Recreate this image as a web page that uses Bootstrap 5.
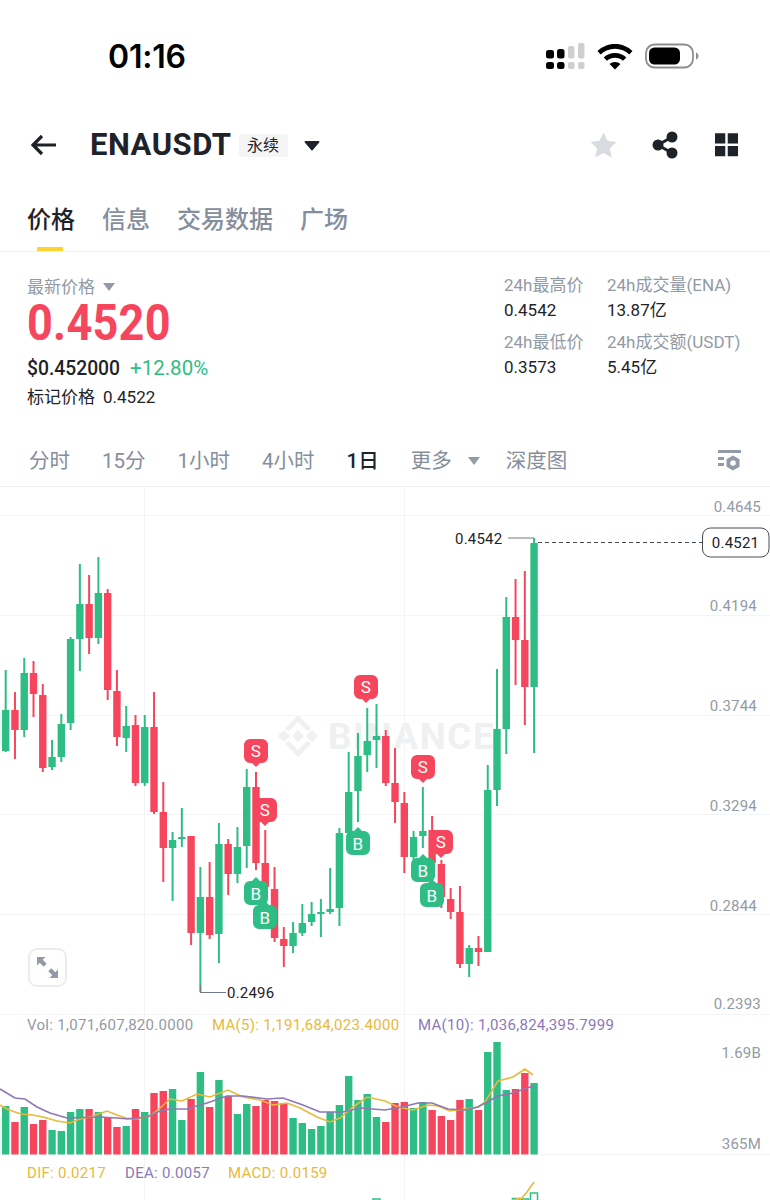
<!DOCTYPE html>
<html lang="zh-CN">
<head>
  <meta charset="UTF-8">
  <title>ENAUSDT</title>
  <link href="https://cdn.jsdelivr.net/npm/bootstrap@5.3.3/dist/css/bootstrap.min.css" rel="stylesheet">
  <style>
    body { width: 770px; height: 1200px; overflow: hidden; background: #fff; color: #1e2329; font-family: Roboto, "Noto Sans CJK SC", sans-serif; }
    .status-bar { height: 114px; padding-left: 108px; }
    .status-time { font: 600 32px/1 Inter, sans-serif; color: #000; width: 436px; letter-spacing: -0.2px; }
    .top-head { height: 62px; padding: 0 32px 0 30px; }
    .pair-name { font-size: 31px; font-weight: 700; margin-left: 33px; letter-spacing: 0.5px; }
    .pair-tag { width: 49px; height: 23px; margin-left: 7px; background: #f5f5f5; border-radius: 3px; font-size: 16px; line-height: 23px; text-align: center; }
    .tabs-row { height: 76px; padding: 29px 0 0 27px; gap: 27px; border-bottom: 1px solid #eef0f2; font-size: 24px; line-height: 30px; color: #848e9c; font-weight: 500; }
    .tab-on { color: #1e2329; position: relative; }
    .tab-on::after { content: ""; position: absolute; left: 10px; bottom: 0; width: 26px; height: 4px; background: #fcd535; }
    .stats-box { height: 184px; padding-left: 27px; }
    .lbl-line { margin-top: 22px; height: 26px; font-size: 17px; line-height: 26px; color: #929aa5; }
    .last-price { height: 46px; font-size: 50px; line-height: 46px; font-weight: 700; color: #f6465d; letter-spacing: 0.3px; transform: scaleX(0.9); transform-origin: left center; }
    .usd-line { margin-top: 10px; height: 24px; font-size: 19.3px; line-height: 24px; font-weight: 500; }
    .up-text { color: #2ebd85; margin-left: 10px; font-size: 20.5px; font-weight: 400; }
    .mark-line { margin-top: 5px; height: 24px; font-size: 17px; line-height: 24px; }
    .mark-line b { font-size: 17px; font-weight: 400; margin-left: 8px; }
    .side-stats { width: 266px; margin-left: auto; padding-top: 21px; display: grid; grid-template-columns: 103px 1fr; row-gap: 8px; align-content: start; font-size: 17px; line-height: 24px; color: #1e2329; }
    .side-stats span { display: block; color: #929aa5; margin-bottom: 1px; white-space: nowrap; }
    .period-row { height: 51px; padding: 0 29px; border-bottom: 1px solid #eef0f2; font-size: 20.5px; color: #848e9c; gap: 32px; }
    .period-on { color: #1e2329; font-weight: 500; }
    .more-box { margin-right: -6px; }
    .tri-gray { width: 0; height: 0; border: 6px solid transparent; border-top: 8px solid #929aa5; border-bottom: 0; }
    .chart-svg { display: block; }
    .chart-svg text { font-family: Roboto, sans-serif; font-size: 15px; letter-spacing: 0.2px; }
    .chart-svg text.legend-txt { letter-spacing: 0.3px; }
  </style>
</head>
<body>

  <!-- status bar -->
  <div class="status-bar d-flex align-items-center">
    <div class="status-time">01:16</div>
    <svg width="155" height="32" viewBox="544 41 155 32">
      <g fill="#000">
        <rect x="546" y="50" width="8" height="8.5" rx="2.5"/><rect x="557" y="49" width="7.5" height="9.5" rx="2.5"/>
        <rect x="546" y="62" width="8" height="7" rx="2.5"/><rect x="557" y="62" width="7.5" height="7" rx="2.5"/>
      </g>
      <g fill="#cfcfcf">
        <rect x="568" y="46" width="6.5" height="12.5" rx="2"/><rect x="578" y="43" width="6.5" height="15.5" rx="2"/>
        <rect x="568" y="62" width="6.5" height="7" rx="2"/><rect x="578" y="62" width="6.5" height="7" rx="2"/>
      </g>
      <path d="M615 44c7 0 13 2.700 17.500 7l-3.200 3.400c-3.700-3.400-8.900-5.600-14.300-5.600s-10.600 2.200-14.300 5.600l-3.200-3.400c4.500-4.300 10.500-7 17.500-7zM615 53c4.500 0 8.300 1.600 11.300 4.400l-3.300 3.400c-2.100-2-4.900-3.100-8-3.100s-5.900 1.100-8 3.100l-3.300-3.400c3-2.800 6.800-4.400 11.300-4.400zM615 62c2.200 0 4 .8 5.400 2l-5.400 5.500-5.400-5.500c1.400-1.200 3.200-2 5.400-2z"/>
      <rect x="646" y="44.500" width="47" height="23" rx="8.500" fill="none" stroke="#8e8e8e" stroke-width="1.800"/>
      <rect x="649" y="47.500" width="31" height="17" rx="5.500"/>
      <path d="M696 52.500c1.500.5 2.500 2 2.500 3.500s-1 3-2.500 3.500z" fill="#8e8e8e"/>
    </svg>
  </div>

  <!-- pair header -->
  <div class="top-head d-flex align-items-center">
    <svg width="27" height="22" viewBox="0 0 27 22"><path d="M26 11H3M12 2l-9 9 9 9" fill="none" stroke="#1e2329" stroke-width="3.200"/></svg>
    <div class="pair-name">ENAUSDT</div>
    <div class="pair-tag">永续</div>
    <svg class="ms-3" width="16" height="11" viewBox="0 0 16 11"><path d="M1.500 1h13c.8 0 1.200.9.700 1.500L8.800 10c-.4.500-1.200.5-1.600 0L.8 2.500C.3 1.900.7 1 1.500 1z" fill="#1e2329"/></svg>
    <svg class="ms-auto" width="27" height="26" viewBox="0 0 27 26"><path d="M13.500 .5l4 8.300 9 1.200-6.500 6.300 1.600 9.100-8.100-4.300-8.100 4.300L7 16.300.5 10l9-1.200z" fill="#d8dce1"/></svg>
    <svg style="margin-left:34.500px" width="26" height="28" viewBox="0 0 26 28">
      <g fill="#1e2329"><circle cx="20" cy="6" r="5.500"/><circle cx="20" cy="22" r="5.500"/><circle cx="6" cy="14" r="5.500"/></g>
      <path d="M20 6L6 14l14 8" fill="none" stroke="#1e2329" stroke-width="3"/>
    </svg>
    <svg style="margin-left:37.500px" width="23" height="24" viewBox="0 0 23.500 24" fill="#1e2329">
      <rect width="10.500" height="10.500"/><rect x="13" width="10.500" height="10.500"/><rect y="13" width="10.500" height="10.500"/><rect x="13" y="13" width="10.500" height="10.500"/>
    </svg>
  </div>

  <!-- tabs -->
  <div class="tabs-row d-flex">
    <div class="tab-on">价格</div>
    <div>信息</div>
    <div>交易数据</div>
    <div>广场</div>
  </div>

  <!-- price block -->
  <div class="stats-box d-flex">
    <div>
      <div class="lbl-line d-flex align-items-center gap-2">最新价格 <span class="tri-gray"></span></div>
      <div class="last-price">0.4520</div>
      <div class="usd-line">$0.452000<span class="up-text">+12.80%</span></div>
      <div class="mark-line">标记价格<b>0.4522</b></div>
    </div>
    <div class="side-stats">
      <div><span>24h最高价</span>0.4542</div>
      <div><span>24h成交量(ENA)</span>13.87亿</div>
      <div><span>24h最低价</span>0.3573</div>
      <div><span>24h成交额(USDT)</span>5.45亿</div>
    </div>
  </div>

  <!-- periods -->
  <div class="period-row d-flex align-items-center">
    <div>分时</div>
    <div>15分</div>
    <div>1小时</div>
    <div>4小时</div>
    <div class="period-on">1日</div>
    <div class="more-box d-flex align-items-center gap-3">更多 <span class="tri-gray"></span></div>
    <div>深度图</div>
    <svg class="ms-auto" width="23" height="22" viewBox="0 0 23 22" fill="#929aa5">
      <rect width="23" height="3"/><rect y="7" width="6" height="3"/><rect y="13" width="6" height="3"/>
      <path d="M15 5.500l6.500 3.700v7.600L15 20.500l-6.500-3.700V9.200z"/><circle cx="15" cy="13" r="2.800" fill="#fff"/>
    </svg>
  </div>

  <!-- chart, drawn from the arrays below -->
  <svg class="chart-svg" id="chart" width="770" height="713" viewBox="0 487 770 713"></svg>

  <script>
    const GREEN = '#2ebd85', RED = '#f6465d', YEL = '#e8b93a', PUR = '#8d78b8';
    const xOf = i => 5.7 + 9.27 * i;

    // [g/r, high, bodyTop, bodyBottom, low] in page pixels, starting at index -1
    const candles = [
      ['g',690,712,746,752],['g',670,710,751,752],['r',692,710,730,759],['g',658,673,730,737],['r',661,673,694,717],
      ['r',684,695,768,772],['g',740,757,767,770],['g',714,724,757,762],['g',637,639,723,730],['g',564,604,639,671],
      ['r',575,604,638,654],['g',557,593,638,644],['r',589,593,690,700],['r',670,691,737,746],['g',706,726,738,752],
      ['r',715,725,783,786],['g',715,727,783,786],['r',692,727,812,814],['r',782,812,848,882],['g',832,840,848,901],
      ['g',808,837,839,847],['r',836,836,933,945],['g',867,897,933,992],['r',862,897,935,939],['g',823,844,934,963],
      ['r',839,844,874,895],['g',827,847,874,883],['g',769,787,846,868],['r',772,787,863,870],['r',830,863,887,890],
      ['r',867,889,938,942],['r',927,939,946,967],['g',922,933,946,953],['g',904,923,933,936],['g',902,914,922,926],
      ['g',899,912,914,937],['g',868,909,912,914],['g',828,833,908,926],['g',752,792,833,833],['g',733,756,791,822],
      ['g',708,741,755,772],['g',704,736,740,768],['r',730,736,783,786],['r',748,783,802,823],['r',792,803,857,873],
      ['g',831,837,857,860],['g',787,831,836,848],['r',816,830,863,866],['r',860,864,897,908],['r',888,899,912,919],
      ['r',886,912,964,968],['g',945,948,964,977],['r',936,948,952,966],['g',765,790,952,952],['g',669,729,790,806],
      ['g',597,617,729,754],['r',579,617,640,685],['r',571,640,687,725],['g',538,543,687,753]
    ];

    // volume bar tops, same index as candles
    const vols = [1117,1106,1122,1107,1124,1120,1130,1131,1112,1109,1109,1112,1117,1127,1126,1109,1112,1093,1091,1089,
      1120,1099,1072,1107,1080,1096,1114,1104,1106,1100,1101,1103,1118,1123,1129,1126,1112,1105,1076,1100,1094,1117,
      1122,1103,1102,1108,1102,1110,1116,1120,1100,1099,1110,1052,1042,1090,1089,1073,1083];

    const ma5 = [[0,1105],[9,1110],[21,1114],[33,1115],[43,1117],[57,1121],[70,1123],[80,1119],[90,1117],[107,1111],[117,1115],[126,1118],
      [137,1119],[150,1116],[160,1108],[170,1099],[182,1101],[197,1094],[210,1097],[228,1090],[243,1097],[260,1100],[273,1105],[287,1103],
      [300,1108],[317,1117],[330,1122],[340,1118],[353,1107],[367,1097],[385,1101],[398,1107],[413,1110],[428,1105],[438,1106],[450,1111],
      [465,1109],[478,1107],[485,1102],[498,1081],[513,1077],[525,1069],[533,1075]];
    const ma10 = [[0,1089],[15,1098],[25,1099],[37,1107],[50,1113],[67,1118],[100,1117],[117,1118],[128,1119],[147,1117],[160,1111],[170,1109],
      [187,1109],[207,1103],[227,1096],[243,1096],[267,1099],[283,1098],[303,1105],[320,1112],[343,1112],[360,1108],[385,1110],[402,1107],
      [418,1103],[432,1103],[448,1109],[465,1110],[478,1107],[498,1096],[513,1093],[533,1086]];

    const grid = [515, 615, 715, 814, 914, 1014];
    const axis = [['0.4645',761,512],['0.4194',757,611],['0.3744',757,711],['0.3294',757,811],['0.2844',757,911],['0.2393',761,1009],
      ['1.69B',761,1058],['365M',761,1149]];
    const sells = [[366,687],[256,751],[265,810],[423,767],[441,842]];
    const buys = [[358,843],[256,893],[265,917],[423,870],[432,895]];

    const line = (pts, c, w) => `<polyline points="${pts.map(p => p.join(',')).join(' ')}" fill="none" stroke="${c}" stroke-width="${w}"/>`;
    let s = '';

    // watermark
    s += `<g fill="#eff0f1"><path d="M284 730l6 6-6 6-6-6zM312 730l6 6-6 6-6-6zM298 730l6 6-6 6-6-6z"/><path d="M298 715l13 13-3.500 3.500-9.500-9.500-9.500 9.500-3.500-3.500zM298 757l13-13-3.500-3.500-9.500 9.500-9.500-9.500-3.500 3.500z"/></g>`;
    s += `<text x="328" y="749" fill="#eff0f1" style="font-size:37px;font-weight:700;letter-spacing:1.500px">BINANCE</text>`;

    // grid
    grid.forEach(y => s += `<rect x="0" y="${y}" width="770" height="1" fill="#f3f4f5"/>`);
    s += `<rect x="144" y="487" width="1" height="713" fill="#f3f4f5"/><rect x="404" y="487" width="1" height="713" fill="#f3f4f5"/>`;
    s += `<rect x="538" y="1154" width="232" height="1" fill="#f3f4f5"/>`;

    // candles
    candles.forEach((c, k) => {
      const x = xOf(k - 1), col = c[0] === 'g' ? GREEN : RED;
      s += `<rect x="${x - 1}" y="${c[1]}" width="2" height="${c[4] - c[1]}" fill="${col}"/>`;
      s += `<rect x="${x - 3.7}" y="${c[2]}" width="7.4" height="${Math.max(c[3] - c[2], 2)}" fill="${col}"/>`;
      s += `<rect x="${x - 3.7}" y="${vols[k]}" width="7.4" height="${1154.5 - vols[k]}" fill="${col}"/>`;
    });

    // high, low and last price
    s += `<path d="M200.500 985v7.500H226M508 538h26" fill="none" stroke="#707a8a" stroke-width="1.200"/>`;
    s += `<text x="227" y="998" fill="#1e2329">0.2496</text><text x="455" y="544" fill="#1e2329">0.4542</text>`;
    s += `<path d="M538 542.500H702" stroke="#474d57" stroke-dasharray="4 3"/>`;
    s += `<rect x="702.500" y="528" width="66.500" height="29" rx="8" fill="#fff" stroke="#474d57"/>`;
    s += `<text x="735.500" y="548" text-anchor="middle" fill="#1e2329">0.4521</text>`;
    axis.forEach(a => s += `<text x="${a[1]}" y="${a[2]}" text-anchor="end" fill="#929aa5">${a[0]}</text>`);

    // trade markers
    sells.forEach(([x, y]) => {
      s += `<path d="M${x - 6} ${y - 12}h12a6 6 0 0 1 6 6v12a6 6 0 0 1-6 6h-2l-4 4-4-4h-2a6 6 0 0 1-6-6v-12a6 6 0 0 1 6-6z" fill="${RED}"/>`;
      s += `<text x="${x}" y="${y + 6}" text-anchor="middle" fill="#fff" style="font-size:17px">S</text>`;
    });
    buys.forEach(([x, y]) => {
      s += `<path d="M${x - 6} ${y + 12}h12a6 6 0 0 0 6-6v-12a6 6 0 0 0-6-6h-2l-4-4-4 4h-2a6 6 0 0 0-6 6v12a6 6 0 0 0 6 6z" fill="${GREEN}"/>`;
      s += `<text x="${x}" y="${y + 7}" text-anchor="middle" fill="#fff" style="font-size:17px">B</text>`;
    });

    // expand button
    s += `<rect x="29" y="949" width="37" height="37" rx="8" fill="#fff" stroke="#eaecef" stroke-width="2"/>`;
    s += `<path d="M37 957h8.500l-2.800 2.800 4 4-3 3-4-4-2.700 2.700zM58 978h-8.500l2.800-2.800-4-4 3-3 4 4 2.700-2.700z" fill="#929aa5"/>`;

    // volume + MACD legends and lines
    s += line(ma5, YEL, 1.6) + line(ma10, PUR, 1.6);
    s += `<text class="legend-txt" x="27" y="1030" fill="#929aa5">Vol: 1,071,607,820.0000</text>`;
    s += `<text class="legend-txt" x="212" y="1030" fill="${YEL}">MA(5): 1,191,684,023.4000</text>`;
    s += `<text class="legend-txt" x="418" y="1030" fill="${PUR}">MA(10): 1,036,824,395.7999</text>`;
    s += `<text class="legend-txt" x="27" y="1178" fill="${YEL}">DIF: 0.0217</text>`;
    s += `<text class="legend-txt" x="125" y="1178" fill="${PUR}">DEA: 0.0057</text>`;
    s += `<text class="legend-txt" x="228" y="1178" fill="${YEL}">MACD: 0.0159</text>`;
    s += `<g fill="none" stroke="${GREEN}" stroke-width="1.500"><rect x="373" y="1199" width="7" height="4"/><rect x="512.500" y="1198.500" width="7" height="4"/><rect x="521.500" y="1199" width="7" height="4"/><rect x="530.500" y="1193" width="7" height="10"/></g>`;
    s += `<path d="M512 1200l10-2 5-6 7-10" fill="none" stroke="${YEL}" stroke-width="1.600"/>`;

    document.getElementById('chart').innerHTML = s;
  </script>
  <script src="https://cdn.jsdelivr.net/npm/bootstrap@5.3.3/dist/js/bootstrap.bundle.min.js"></script>
</body>
</html>
